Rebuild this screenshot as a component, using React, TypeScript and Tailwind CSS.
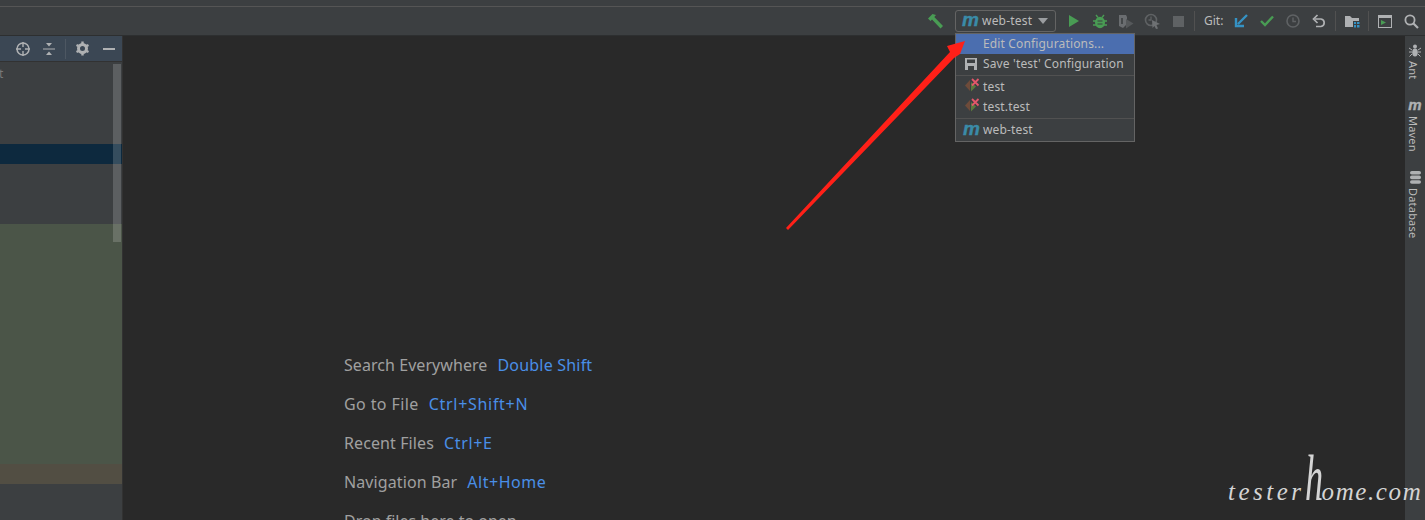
import React, { ReactNode } from "react";

const uiFont = "font-['Noto_Sans','Open_Sans',sans-serif]";

const IconBox = ({ children }: { children: ReactNode }) => (
  <div className="flex h-[26px] w-[26px] items-center justify-center">{children}</div>
);

const Sep = () => <div className="ml-[3px] h-5 w-px bg-[#515151]" />;

const MavenM = ({ className }: { className: string }) => (
  <span className={`font-['Liberation_Sans',sans-serif] font-bold italic leading-none [-webkit-text-stroke:0.4px_currentColor] ${className}`}>m</span>
);

const RunConfigIcon = () => (
  <svg width="15" height="14" viewBox="0 0 15 14" className="-mt-[5px] ml-[9px] shrink-0">
    <path d="M5 2 L0 7.5 L5 13 Z" fill="#6e4b3a" />
    <path d="M6 4 L11 8.5 L6 13.5 Z" fill="#5b7a3e" />
    <path d="M7 1 L13.5 7.5 M13.5 1 L7 7.5" stroke="#e2566a" strokeWidth="1.8" />
  </svg>
);

const Toolbar = () => (
  <div className={`flex h-[29px] items-center justify-end border-b border-[#2d2f30] bg-[#3c3f41] pr-px ${uiFont}`}>
    <IconBox>
      <svg width="17" height="16" viewBox="0 0 16 16">
        <path d="M0.5 5.5 L5 1 L8.5 2 L6.8 4 L15.5 13 L13 15.5 L4.5 6.5 L3 8 Z" fill="#499c54" />
      </svg>
    </IconBox>
    <div className="ml-[7px] flex h-[22px] w-[101px] items-center rounded-[3px] border border-[#646464] pl-[6px] text-[12px] tracking-[0.2px] text-[#bbbbbb]">
      <MavenM className="-mt-[3px] w-[19px] text-[19px] tracking-normal text-[#3a8ba8]" />
      <span className="ml-[1px]">web-test</span>
      <svg width="10" height="6" viewBox="0 0 10 6" className="ml-[6px]">
        <path d="M0 0 H10 L5 6 Z" fill="#9a9da0" />
      </svg>
    </div>
    <div className="ml-[5px] flex">
      <IconBox>
        <svg width="12" height="14" viewBox="0 0 12 14">
          <path d="M1 1 L11 7 L1 13 Z" fill="#499c54" />
        </svg>
      </IconBox>
      <IconBox>
        <svg width="14" height="15" viewBox="0 0 14 15">
          <ellipse cx="7" cy="8.5" rx="5" ry="5.8" fill="#499c54" />
          <path d="M3 1 L5 3.5 M11 1 L9 3.5 M0 7 H3 M11 7 H14 M0 11 H3 M11 11 H14" stroke="#499c54" strokeWidth="1.4" />
          <path d="M4.5 7 H9.5 M4.5 10 H9.5" stroke="#3c3f41" strokeWidth="1.2" />
        </svg>
      </IconBox>
      <IconBox>
        <svg width="16" height="15" viewBox="0 0 16 15">
          <path d="M1 1 H8 L9 3 V10 L5 14 L1 12 Z" fill="#6a6d70" />
          <path d="M8 5 L15.5 9.5 L8 14.5 Z" fill="#55585a" />
          <path d="M4 4 V10" stroke="#3c3f41" strokeWidth="1.6" />
        </svg>
      </IconBox>
      <IconBox>
        <svg width="17" height="16" viewBox="0 0 17 16">
          <circle cx="7" cy="7" r="5.5" fill="none" stroke="#5f6264" strokeWidth="1.6" />
          <path d="M7 3.5 V7 H4.5" fill="none" stroke="#5f6264" strokeWidth="1.3" />
          <path d="M8 7 L16 11 L12.5 12 L14 15.5 L12 16 L10.5 13 L8.5 15 Z" fill="#6e7173" />
        </svg>
      </IconBox>
      <IconBox>
        <div className="h-[11px] w-[11px] bg-[#5f6264]" />
      </IconBox>
    </div>
    <Sep />
    <span className="ml-[9px] w-[20px] text-[12px] text-[#bbbbbb]">Git:</span>
    <div className="ml-[4px] flex">
      <IconBox>
        <svg width="14" height="14" viewBox="0 0 14 14">
          <path d="M13 1 L4 10 M2 4 V12 H10" fill="none" stroke="#3592c4" strokeWidth="2.4" />
        </svg>
      </IconBox>
      <IconBox>
        <svg width="14" height="12" viewBox="0 0 14 12">
          <path d="M1 6 L5 10 L13 1.5" fill="none" stroke="#499c54" strokeWidth="2.4" />
        </svg>
      </IconBox>
      <IconBox>
        <svg width="14" height="14" viewBox="0 0 14 14">
          <circle cx="7" cy="7" r="6" fill="none" stroke="#5f6264" strokeWidth="1.6" />
          <path d="M7 3.5 V7.5 H10" fill="none" stroke="#5f6264" strokeWidth="1.4" />
        </svg>
      </IconBox>
      <IconBox>
        <svg width="14" height="14" viewBox="0 0 14 14">
          <path d="M3 5 H9 A3.8 3.8 0 0 1 9 12.5 H4" fill="none" stroke="#afb1b3" strokeWidth="1.7" />
          <path d="M5.5 1 L1.5 5 L5.5 9" fill="none" stroke="#afb1b3" strokeWidth="1.7" />
        </svg>
      </IconBox>
    </div>
    <Sep />
    <div className="ml-[3px]">
      <IconBox>
        <svg width="15" height="13" viewBox="0 0 15 13">
          <path d="M0 1 H5 L7 3 H14 V6 H8 V12 H0 Z" fill="#afb1b3" />
          <path d="M9 7 H11 V9 H9 Z M12 7 H14.5 V9 H12 Z M9 10 H11 V12.5 H9 Z M12 10 H14.5 V12.5 H12 Z" fill="#3592c4" />
        </svg>
      </IconBox>
    </div>
    <Sep />
    <div className="ml-[3px] flex">
      <IconBox>
        <svg width="14" height="13" viewBox="0 0 14 13">
          <rect x="0.5" y="0.5" width="13" height="12" fill="none" stroke="#afb1b3" />
          <path d="M0 0 H14 V3 H0 Z" fill="#afb1b3" />
          <path d="M3 5 L8 7.5 L3 10 Z" fill="#499c54" />
        </svg>
      </IconBox>
      <IconBox>
        <svg width="15" height="15" viewBox="0 0 15 15">
          <circle cx="6" cy="6" r="4.6" fill="none" stroke="#afb1b3" strokeWidth="1.8" />
          <path d="M9.5 9.5 L14 14" stroke="#afb1b3" strokeWidth="2.2" />
        </svg>
      </IconBox>
    </div>
  </div>
);

const LeftPanel = () => (
  <div className="flex w-[122px] shrink-0 flex-col overflow-hidden bg-[#3c3f41]">
    <div className="flex h-[26px] shrink-0 items-center justify-end border-b border-[#323232] bg-[#3b4754] pr-[7px]">
      <svg width="16" height="16" viewBox="0 0 16 16">
        <circle cx="8" cy="8" r="6" fill="none" stroke="#afb1b3" strokeWidth="1.5" />
        <path d="M8 1 V6 M8 10 V15 M1 8 H6 M10 8 H15" stroke="#afb1b3" strokeWidth="1.4" />
      </svg>
      <svg width="14" height="14" viewBox="0 0 14 14" className="ml-[11px]">
        <path d="M1 7 H13" stroke="#afb1b3" strokeWidth="1" />
        <path d="M4 1 H10 L7 4.5 Z M4 13 H10 L7 9.5 Z" fill="#afb1b3" />
      </svg>
      <div className="ml-[9px] h-5 w-px bg-[#4d5762]" />
      <svg width="15" height="15" viewBox="0 0 15 15" className="ml-[9px]">
        <circle cx="7.5" cy="7.5" r="4" fill="none" stroke="#afb1b3" strokeWidth="3" />
        <path d="M7.5 0.5 V3 M7.5 12 V14.5 M1.5 4 L3.5 5 M11.5 10 L13.5 11 M1.5 11 L3.5 10 M11.5 5 L13.5 4" stroke="#afb1b3" strokeWidth="2.4" />
      </svg>
      <div className="ml-[13px] h-[2px] w-3 bg-[#afb1b3]" />
    </div>
    <div className="relative flex-1">
      <div className="h-[82px] pt-[2px]">
        <span className={`-ml-[1px] block text-[12px] leading-[20px] text-[#787878] ${uiFont}`}>t</span>
      </div>
      <div className="h-5 bg-[#0d293e]" />
      <div className="h-[60px]" />
      <div className="h-[240px] bg-[#4b5548]" />
      <div className="h-5 bg-[#524e43]" />
      <div className="absolute left-[113px] top-[2px] h-[178px] w-2 bg-white/[0.17]" />
    </div>
  </div>
);

const Hint = ({ label, keys, labelClass, keysClass }: { label: string; keys: string; labelClass: string; keysClass: string }) => (
  <div className="flex h-[39px] shrink-0 items-center text-[16px] whitespace-nowrap">
    <span className={`text-[#a0a0a0] ${labelClass}`}>{label}</span>
    <span className={`ml-[10px] text-[#4a8fe7] ${keysClass}`}>{keys}</span>
  </div>
);

const Editor = () => (
  <div className={`relative flex-1 overflow-hidden bg-[#292929] pl-[221px] pt-[309px] ${uiFont}`}>
    <Hint label="Search Everywhere" keys="Double Shift" labelClass="tracking-[0.06px]" keysClass="tracking-[0.2px]" />
    <Hint label="Go to File" keys="Ctrl+Shift+N" labelClass="tracking-[0.4px]" keysClass="tracking-[0.7px]" />
    <Hint label="Recent Files" keys="Ctrl+E" labelClass="tracking-[0.1px]" keysClass="tracking-[0.65px]" />
    <Hint label="Navigation Bar" keys="Alt+Home" labelClass="tracking-[0.1px]" keysClass="tracking-[0.55px]" />
    <div className="flex h-[39px] items-center text-[16px] text-[#a0a0a0]">Drop files here to open</div>
  </div>
);

const ToolTab = ({ icon, label }: { icon: ReactNode; label: string }) => (
  <div className="flex flex-col items-center">
    <div className="flex h-[13px] items-center justify-center">{icon}</div>
    <span className="mr-[4px] mt-[4px] text-[11px] leading-[14px] tracking-[0.2px] text-[#bbbbbb] [writing-mode:vertical-rl]">{label}</span>
  </div>
);

const RightStrip = () => (
  <div className={`flex w-5 shrink-0 flex-col items-center bg-[#3c3f41] pt-[8px] ${uiFont}`}>
    <ToolTab
      label="Ant"
      icon={
        <svg width="12" height="13" viewBox="0 0 12 13">
          <circle cx="6" cy="2.5" r="2" fill="#afb1b3" />
          <ellipse cx="6" cy="8.5" rx="2.8" ry="4" fill="#afb1b3" />
          <path d="M0 4 L3 6 M12 4 L9 6 M0 8 H3 M12 8 H9 M0.5 12.5 L3 10 M11.5 12.5 L9 10" stroke="#afb1b3" />
        </svg>
      }
    />
    <div className="mt-[20px]">
      <ToolTab label="Maven" icon={<MavenM className="-mt-[3px] text-[15px] text-[#afb1b3]" />} />
    </div>
    <div className="mt-[19px]">
      <ToolTab
        label="Database"
        icon={
          <svg width="11" height="13" viewBox="0 0 11 13">
            <rect x="0" y="0" width="11" height="3.6" rx="1.8" fill="#afb1b3" />
            <rect x="0" y="4.6" width="11" height="3.6" rx="1.8" fill="#afb1b3" />
            <rect x="0" y="9.2" width="11" height="3.6" rx="1.8" fill="#afb1b3" />
          </svg>
        }
      />
    </div>
  </div>
);

const MenuRow = ({ icon, label, active }: { icon?: ReactNode; label: string; active?: boolean }) => (
  <div className={`flex h-5 items-center ${active ? "bg-[#4b6eaf]" : ""}`}>
    <div className="flex w-[27px] shrink-0 items-center justify-start">{icon}</div>
    <span>{label}</span>
  </div>
);

const ConfigMenu = () => (
  <div className={`absolute left-[955px] top-[33px] w-[180px] border border-[#646464] bg-[#3c3f41] text-[12px] tracking-[0.15px] text-[#bbbbbb] ${uiFont}`}>
    <MenuRow active label="Edit Configurations..." />
    <MenuRow
      label="Save 'test' Configuration"
      icon={
        <svg width="12" height="12" viewBox="0 0 12 12" className="ml-[9px]">
          <path d="M0 0 H12 V12 H0 Z" fill="#afb1b3" />
          <path d="M2 1.5 H10 V5 H2 Z M3 8 H9 V12 H3 Z" fill="#3c3f41" />
        </svg>
      }
    />
    <div className="mt-px h-px bg-[#515151]" />
    <div className="mt-px">
      <MenuRow label="test" icon={<RunConfigIcon />} />
      <MenuRow label="test.test" icon={<RunConfigIcon />} />
    </div>
    <div className="mt-px h-px bg-[#515151]" />
    <div className="mt-px pb-px">
      <MenuRow label="web-test" icon={<MavenM className="-mt-[4px] ml-[7px] text-[19px] tracking-normal text-[#3a8ba8]" />} />
    </div>
  </div>
);

const Watermark = () => (
  <div className="absolute left-[1228px] top-[443px] flex items-baseline whitespace-nowrap font-['Liberation_Serif',serif] text-[25px] italic leading-[24px] text-[#d4d4d4]">
    <span className="tracking-[3.5px]">tester</span>
    <span className="inline-block w-[17px] origin-bottom-left scale-x-[0.55] text-[66px] leading-[70px]">h</span>
    <span className="tracking-[1.6px]">ome.com</span>
  </div>
);

export default function App() {
  return (
    <div className="relative flex h-[520px] w-[1425px] flex-col overflow-hidden bg-[#292929]">
      <div className="h-[6px] shrink-0 bg-[#3c3f41]" />
      <div className="h-px shrink-0 bg-[#555555]" />
      <Toolbar />
      <div className="flex min-h-0 flex-1">
        <LeftPanel />
        <div className="w-px shrink-0 bg-[#323232]" />
        <Editor />
        <RightStrip />
      </div>
      <ConfigMenu />
      {/* red annotation arrow on top of the menu */}
      <svg className="absolute left-0 top-0" width="1425" height="520" viewBox="0 0 1425 520">
        <polygon points="786,228 788,230 954,58 960,54 965,41 947,46 950,52" fill="#ff2018" />
      </svg>
      <Watermark />
    </div>
  );
}
